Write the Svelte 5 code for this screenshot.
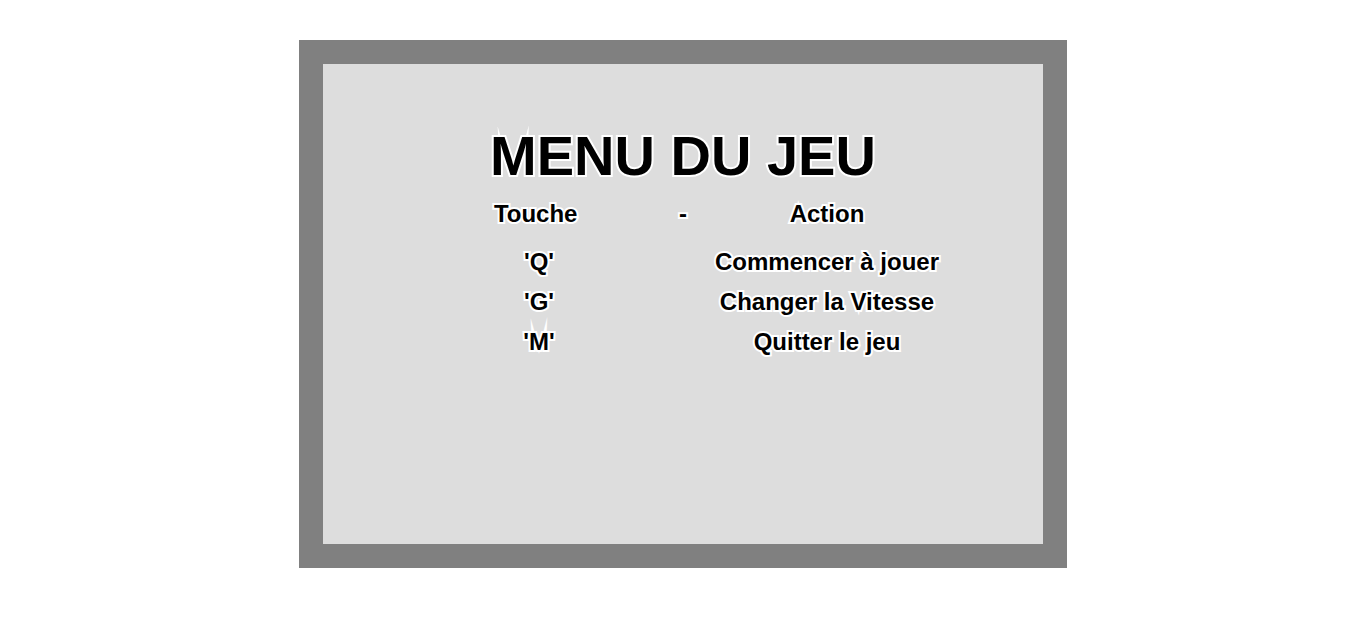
<script>
  const commands = [
    { key: "'Q'", action: 'Commencer à jouer' },
    { key: "'G'", action: 'Changer la Vitesse' },
    { key: "'M'", action: 'Quitter le jeu' }
  ];
</script>

{#snippet outlined(label, height, baseline)}
  <svg width="100%" {height}>
    <text x="50%" y={baseline}>{label}</text>
  </svg>
{/snippet}

<main>
  <section class="board">
    <h1>{@render outlined('MENU DU JEU', 74, 55)}</h1>
    <table>
      <thead>
        <tr>
          <th>{@render outlined('Touche ', 40, 28)}</th>
          <th class="dash">{@render outlined('-', 40, 28)}</th>
          <th>{@render outlined('Action', 40, 28)}</th>
        </tr>
      </thead>
      <tbody>
        {#each commands as command}
          <tr>
            <td>{@render outlined(command.key, 40, 28)}</td>
            <td></td>
            <td>{@render outlined(command.action, 40, 28)}</td>
          </tr>
        {/each}
      </tbody>
    </table>
  </section>
</main>

<style>
  :global(body) {
    margin: 0;
    background: #fff;
  }

  main {
    display: flex;
    justify-content: center;
    padding: 40px 16px;
  }

  .board {
    box-sizing: border-box;
    width: 100%;
    max-width: 768px;
    min-height: 528px;
    padding-top: 56px;
    border: 24px solid #808080;
    background: #ddd;
    font-family: "Liberation Sans", Arial, sans-serif;
    font-weight: bold;
  }

  /* Mitred white outline painted behind the black letters */
  svg {
    display: block;
    overflow: visible;
  }

  text {
    fill: #000;
    stroke: #fff;
    stroke-width: 4px;
    stroke-linejoin: miter;
    stroke-miterlimit: 10;
    paint-order: stroke fill;
    text-anchor: middle;
    white-space: pre;
  }

  h1 {
    margin: 0;
    font-size: 56px;
  }

  table {
    width: 100%;
    max-width: 536px;
    margin: 0 auto;
    border-collapse: collapse;
    table-layout: fixed;
    font-size: 24px;
  }

  th,
  td {
    padding: 0;
  }

  th {
    padding-bottom: 8px;
  }

  .dash {
    width: 40px;
  }
</style>
